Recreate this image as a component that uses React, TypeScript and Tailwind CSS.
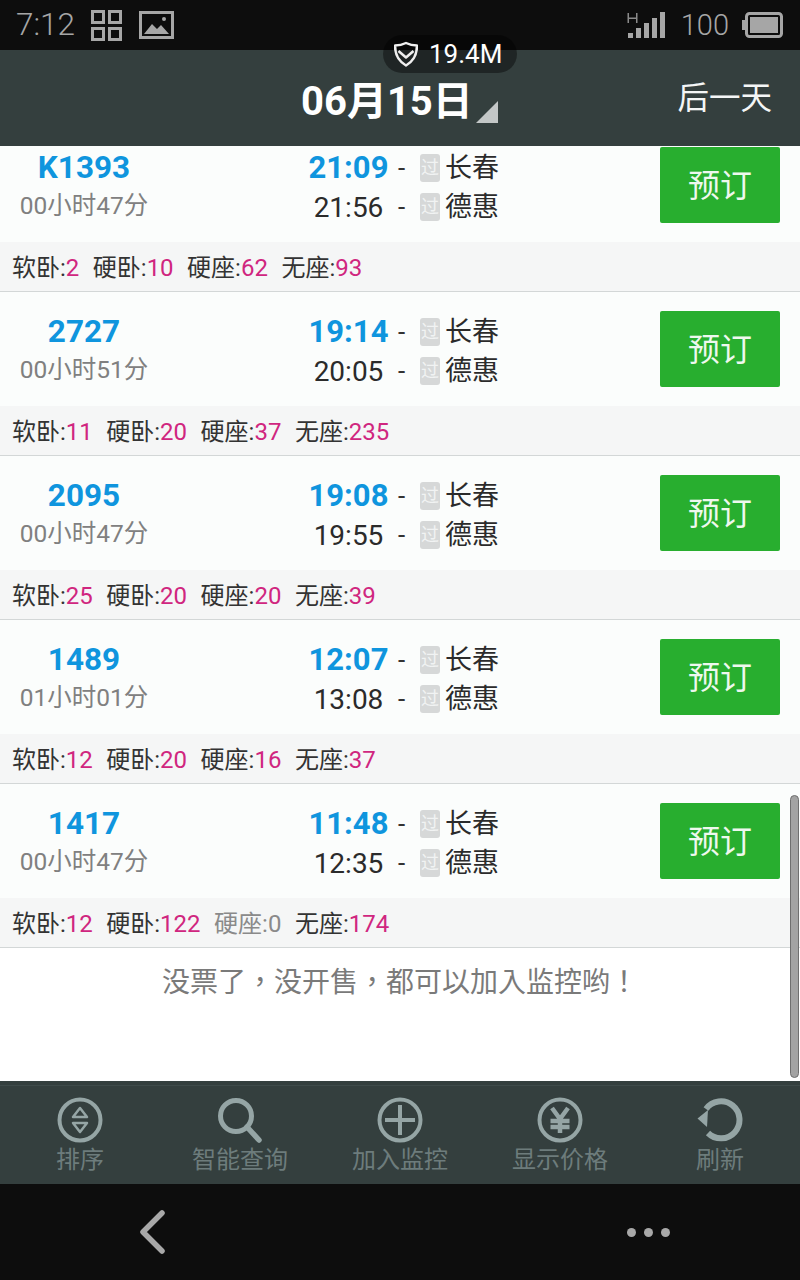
const trains = [
  { no: 'K1393', dur: '00小时47分', dep: '21:09', arr: '21:56', seats: [['软卧', '2'], ['硬卧', '10'], ['硬座', '62'], ['无座', '93']] },
  { no: '2727', dur: '00小时51分', dep: '19:14', arr: '20:05', seats: [['软卧', '11'], ['硬卧', '20'], ['硬座', '37'], ['无座', '235']] },
  { no: '2095', dur: '00小时47分', dep: '19:08', arr: '19:55', seats: [['软卧', '25'], ['硬卧', '20'], ['硬座', '20'], ['无座', '39']] },
  { no: '1489', dur: '01小时01分', dep: '12:07', arr: '13:08', seats: [['软卧', '12'], ['硬卧', '20'], ['硬座', '16'], ['无座', '37']] },
  { no: '1417', dur: '00小时47分', dep: '11:48', arr: '12:35', seats: [['软卧', '12'], ['硬卧', '122'], ['硬座', '0'], ['无座', '174']] },
];

function StationLine({ name }: { name: string }) {
  return (
    <div className="flex h-[39px] items-center">
      <span className="w-[10px] text-[26px] leading-none text-[#333]">-</span>
      <span className="ml-[12px] flex h-[28px] w-[20px] items-center justify-center rounded-[3px] bg-[#d6d8d8] text-[18px] leading-none text-[#f1f3f3]">过</span>
      <span className="ml-[5px] pt-[2px] text-[27px] leading-none text-[#2b2b2b]">{name}</span>
    </div>
  );
}

function TrainRow({ t }: { t: (typeof trains)[number] }) {
  return (
    <div className="border-b border-[#d3d7d7]">
      <div className="flex h-[114px] items-start bg-[#fbfdfc] pt-[20px]">
        <div className="w-[168px] text-center">
          <div className="flex h-[39px] items-center justify-center text-[31.5px] leading-none font-bold text-[#0f95de]">{t.no}</div>
          <div className="flex h-[39px] items-center justify-center text-[24.5px] leading-none text-[#808080]">{t.dur}</div>
        </div>
        <div className="ml-[131px] w-[99px] text-center">
          <div className="flex h-[39px] items-center justify-center text-[31px] leading-none font-bold text-[#0f95de]">{t.dep}</div>
          <div className="flex h-[39px] items-center justify-center pt-[3px] text-[28px] leading-none text-[#2b2b2b]">{t.arr}</div>
        </div>
        <div>
          <StationLine name="长春" />
          <StationLine name="德惠" />
        </div>
        <button className="mt-[-1px] mr-[20px] ml-auto h-[76px] w-[120px] rounded-[2px] bg-[#28ae2f] pt-[2px] text-[32px] leading-none text-[#eef8ee]">预订</button>
      </div>
      <div className="flex h-[49px] items-center gap-[13.5px] bg-[#f5f6f6] pt-[2px] pl-[12px] text-[24px] leading-none text-[#333]">
        {t.seats.map(([label, n]) => (
          <span key={label} className={n === '0' ? 'text-[#8a8a8a]' : ''}>
            {label}:<span className={n === '0' ? '' : 'text-[#d0267f]'}>{n}</span>
          </span>
        ))}
      </div>
    </div>
  );
}

const iconColor = '#95a5a5';

function SortIcon() {
  return (
    <svg width="46" height="46" viewBox="0 0 46 46" fill="none" stroke={iconColor}>
      <circle cx="23" cy="23" r="20.5" strokeWidth="4" />
      <path d="M23 11 L30 20 H16 Z M16 26 H30 L23 35 Z" strokeWidth="2.5" strokeLinejoin="round" />
    </svg>
  );
}

function SearchIcon() {
  return (
    <svg width="46" height="46" viewBox="0 0 46 46" fill="none" stroke={iconColor}>
      <circle cx="19" cy="19" r="15.5" strokeWidth="5" />
      <path d="M30 30 L42 43" strokeWidth="5.5" strokeLinecap="round" />
    </svg>
  );
}

function PlusIcon() {
  return (
    <svg width="46" height="46" viewBox="0 0 46 46" fill="none" stroke={iconColor}>
      <circle cx="23" cy="23" r="20.5" strokeWidth="4" />
      <path d="M23 8 V38 M8 23 H38" strokeWidth="4" />
    </svg>
  );
}

function YenIcon() {
  return (
    <svg width="46" height="46" viewBox="0 0 46 46" fill="none" stroke={iconColor}>
      <circle cx="23" cy="23" r="20.5" strokeWidth="4" />
      <path d="M15 11 L23 22 L31 11 M23 22 V36 M13.5 24 H32.5 M13.5 30 H32.5" strokeWidth="4.5" />
    </svg>
  );
}

function RefreshIcon() {
  return (
    <svg width="46" height="46" viewBox="0 0 46 46" fill="none">
      <path d="M9 12 A18.5 18.5 0 1 1 11 36" stroke={iconColor} strokeWidth="6" />
      <path d="M0.5 21.5 L11 13 L10 30 Z" fill={iconColor} />
    </svg>
  );
}

const tabs = [
  { label: '排序', icon: <SortIcon /> },
  { label: '智能查询', icon: <SearchIcon /> },
  { label: '加入监控', icon: <PlusIcon /> },
  { label: '显示价格', icon: <YenIcon /> },
  { label: '刷新', icon: <RefreshIcon /> },
];

export default function App() {
  return (
    <div className="relative flex h-[1280px] w-[800px] flex-col overflow-hidden bg-white font-['Roboto','Noto_Sans_CJK_SC',sans-serif]">
      {/* Status bar */}
      <div className="flex h-[50px] shrink-0 items-center bg-[#0d0d0d] pr-[17px] pl-[16px] text-[#a6a6a6]">
        <span className="text-[31.5px] leading-none font-light">7:12</span>
        <svg className="ml-[16px]" width="31" height="31" viewBox="0 0 31 31" fill="none" stroke="#a6a6a6" strokeWidth="3">
          <rect x="1.5" y="1.5" width="11" height="11" />
          <rect x="18.5" y="1.5" width="11" height="11" />
          <rect x="1.5" y="18.5" width="11" height="11" />
          <rect x="18.5" y="18.5" width="11" height="11" />
        </svg>
        <svg className="ml-[17px]" width="35" height="28" viewBox="0 0 35 28" fill="none">
          <rect x="1.5" y="1.5" width="32" height="25" stroke="#a6a6a6" strokeWidth="3" />
          <path d="M5 23 L13 13 L18 18 L22 14 L30 23 Z" fill="#a6a6a6" />
          <circle cx="25" cy="8" r="2" fill="#a6a6a6" />
        </svg>
        <svg className="ml-auto" width="39" height="28" viewBox="0 0 39 28" fill="#a6a6a6">
          <path d="M0.5 2 H2 V6.5 H9 V2 H10.5 V12 H9 V8 H2 V12 H0.5 Z" fill="#8a8a8a" />
          <rect x="1" y="22" width="5" height="5" />
          <rect x="9" y="17" width="5" height="10" />
          <rect x="17" y="12" width="5" height="15" />
          <rect x="25" y="7" width="5" height="20" />
          <rect x="33" y="1" width="5" height="26" />
        </svg>
        <span className="ml-[15px] text-[29px] leading-none font-light">100</span>
        <svg className="ml-[13px]" width="41" height="26" viewBox="0 0 41 26" fill="none">
          <rect x="4.5" y="1.5" width="35" height="23" rx="3" stroke="#a6a6a6" strokeWidth="3" />
          <rect x="8" y="5" width="28" height="16" fill="#a6a6a6" />
          <rect x="0" y="8" width="3" height="10" fill="#a6a6a6" />
        </svg>
      </div>

      {/* Header */}
      <div className="flex h-[96px] shrink-0 items-center bg-[#343f3e] pr-[28px] pl-[301px] text-white">
        <span className="mt-[8px] text-[40px] leading-none font-bold">06月15日</span>
        <svg className="mt-[28px] ml-[3px]" width="22" height="22" viewBox="0 0 22 22">
          <path d="M22 0 V22 H0 Z" fill="#c3c7c7" />
        </svg>
        <span className="mt-[2px] ml-auto text-[31.5px] leading-none text-[#f4f6f6]">后一天</span>
      </div>

      {/* Traffic pill */}
      <div className="absolute top-[35px] left-[383px] flex h-[38px] w-[134px] items-center rounded-[19px] bg-black/40 pl-[11px] text-white">
        <svg width="24" height="26" viewBox="0 0 24 26" fill="none" stroke="#f0f0f0" strokeWidth="2.5" strokeLinejoin="round">
          <path d="M12 2 C15 3.5 19 4.5 23 4.5 C23 13 20 20 12 24.5 C4 20 1 13 1 4.5 C5 4.5 9 3.5 12 2 Z" />
          <path d="M4.5 10 L12 16.5 L19.5 10" />
        </svg>
        <span className="ml-[11px] text-[26px] leading-none">19.4M</span>
      </div>

      {/* List */}
      <div className="relative min-h-0 flex-1 overflow-hidden bg-white">
        <div className="mt-[-18px]">
          {trains.map((t) => (
            <TrainRow key={t.no} t={t} />
          ))}
        </div>
        <div className="pt-[18px] text-center font-['Roboto','Noto_Sans_CJK_TC',sans-serif] text-[28px] leading-[34px] text-[#7a7a7a]">没票了，没开售，都可以加入监控哟！</div>
        <div className="absolute top-[649px] right-[1px] h-[283px] w-[9px] rounded-[5px] border border-[#6f6f6f] bg-[#a3a3a3]" />
      </div>

      {/* Bottom tabs */}
      <div className="h-[103px] shrink-0 bg-[#343f3e] pt-[4px]">
        <div className="grid grid-cols-5 border-t border-[#3f4b4a]">
          {tabs.map((tab) => (
            <div key={tab.label} className="flex flex-col items-center pt-[11px]">
              {tab.icon}
              <span className="mt-[2px] text-[24px] leading-[30px] text-[#6d7c7c]">{tab.label}</span>
            </div>
          ))}
        </div>
      </div>

      {/* Navigation bar */}
      <div className="flex h-[96px] shrink-0 items-center justify-between bg-[#0d0d0d] pr-[130px] pl-[138px]">
        <svg width="28" height="44" viewBox="0 0 28 44" fill="none">
          <path d="M24 3 L5 22 L24 41" stroke="#a8a8a8" strokeWidth="5.5" strokeLinecap="round" strokeLinejoin="round" />
        </svg>
        <div className="flex gap-[8px]">
          <span className="h-[9px] w-[9px] rounded-full bg-[#a8a8a8]" />
          <span className="h-[9px] w-[9px] rounded-full bg-[#a8a8a8]" />
          <span className="h-[9px] w-[9px] rounded-full bg-[#a8a8a8]" />
        </div>
      </div>
    </div>
  );
}
